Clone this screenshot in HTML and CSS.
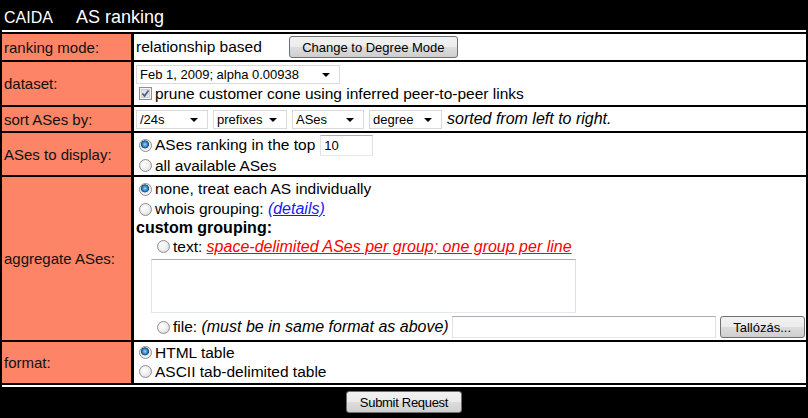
FILE: index.html
```html
<!DOCTYPE html>
<html>
<head lang="en">
    <meta charset="UTF-8">
    <title>AS ranking</title>
    <link rel="stylesheet" href="styles.css">
</head>
<body>
<div class="masthead">
    <span class="org">CAIDA</span>
    <span class="title">AS ranking</span>
</div>
<form class="sheet" action="javascript:;">
    <div class="label">ranking mode:</div>
    <div class="field mode">
        <span>relationship based</span>
        <button type="button" class="btn modeBtn">Change to Degree Mode</button>
    </div>

    <div class="label">dataset:</div>
    <div class="field dataset">
        <span class="pick wide"><select><option>Feb 1, 2009; alpha 0.00938</option></select><i class="arrow"></i></span>
        <div class="line">
            <span class="check"><svg width="13" height="13" viewBox="0 0 13 13"><rect x="0.5" y="0.5" width="12" height="12" fill="#f4f4f4" stroke="#8e8f8f"/><rect x="2.5" y="2.5" width="8" height="8" fill="#e3e3e3" stroke="#d0d0d0"/><path d="M3.5 6.5 L5.5 9 L9.5 3.5" fill="none" stroke="#4a5f97" stroke-width="1.8"/></svg></span>
            <span>prune customer cone using inferred peer-to-peer links</span>
        </div>
    </div>

    <div class="label">sort ASes by:</div>
    <div class="field sort">
        <span class="pick w72"><select><option>/24s</option></select><i class="arrow"></i></span>
        <span class="pick w74"><select><option>prefixes</option></select><i class="arrow"></i></span>
        <span class="pick w72"><select><option>ASes</option></select><i class="arrow"></i></span>
        <span class="pick w73"><select><option>degree</option></select><i class="arrow"></i></span>
        <em>sorted from left to right.</em>
    </div>

    <div class="label">ASes to display:</div>
    <div class="field display">
        <div class="line tall">
            <input type="radio" name="top" checked>
            <span>ASes ranking in the top</span>
            <input type="text" class="txt topN" value="10">
        </div>
        <div class="line">
            <input type="radio" name="top">
            <span>all available ASes</span>
        </div>
    </div>

    <div class="label">aggregate ASes:</div>
    <div class="field aggregate">
        <div class="line l20">
            <input type="radio" name="agg" checked>
            <span>none, treat each AS individually</span>
        </div>
        <div class="line l20">
            <input type="radio" name="agg">
            <span>whois grouping:&nbsp;<a href="javascript:;" class="details">(details)</a></span>
        </div>
        <div class="custom">custom grouping:</div>
        <div class="indent">
            <div class="line">
                <input type="radio" name="agg">
                <span>text:&nbsp;<em class="hint">space-delimited ASes per group; one group per line</em></span>
            </div>
            <textarea class="groups"></textarea>
            <div class="line fileRow">
                <input type="radio" name="agg">
                <span>file:&nbsp;<em>(must be in same format as above)</em></span>
                <input type="text" class="txt fileName">
                <button type="button" class="btn browse">Tallózás...</button>
            </div>
        </div>
    </div>

    <div class="label">format:</div>
    <div class="field format">
        <div class="line">
            <input type="radio" name="fmt" checked>
            <span>HTML table</span>
        </div>
        <div class="line">
            <input type="radio" name="fmt">
            <span>ASCII tab-delimited table</span>
        </div>
    </div>
</form>
<div class="footer">
    <button type="button" class="btn submit">Submit Request</button>
</div>
</body>
</html>
```

FILE: styles.css
```css
* {
    margin: 0;
    padding: 0;
    box-sizing: border-box;
}

body {
    background: #000;
    font-size: 15px;
    font-family: "Liberation Sans", Arial, sans-serif;
    color: #000;
}

.masthead {
    height: 30px;
    display: flex;
    align-items: baseline;
    padding: 7px 0 0 4px;
    color: #fff;
}

.masthead .org {
    font-size: 16px;
    width: 72px;
}

.masthead .title {
    font-size: 18px;
}

.sheet {
    margin: 0 2px;
    padding: 2px 0;
    border-top: 2px solid #fff;
    border-bottom: 2px solid #fff;
    display: grid;
    grid-template-columns: 129px 1fr;
    grid-template-rows: 26px 43px 24px 42px 163px 41px;
    gap: 2px 3px;
}

.label {
    background: #fd8466;
    color: #111;
    padding-left: 2px;
    display: flex;
    align-items: center;
}

.field {
    background: #fff;
    padding-left: 2px;
    font-size: 15.5px;
}

.field em {
    font-size: 16px;
}

.line {
    display: flex;
    align-items: center;
    height: 19px;
    white-space: nowrap;
}

.line.l20 {
    height: 20px;
}

.line.tall {
    height: 22px;
}

.mode {
    display: flex;
    align-items: center;
}

.modeBtn {
    margin-left: 27px;
    width: 169px;
    height: 22px;
}

.dataset {
    padding-top: 3px;
}

.sort {
    display: flex;
    align-items: center;
    gap: 5px;
}

.display {
    padding-top: 1px;
}

.aggregate {
    padding-top: 2px;
}

.format {
    padding-top: 1px;
}

/* selects */
.pick {
    position: relative;
    display: inline-block;
    height: 19px;
}

.pick select {
    appearance: none;
    -webkit-appearance: none;
    width: 100%;
    height: 100%;
    border: 1px solid #d9d9d9;
    background: #fff;
    font-family: "Liberation Sans", Arial, sans-serif;
    font-size: 13px;
    color: #000;
    padding-left: 3px;
    outline: none;
}

.pick .arrow {
    position: absolute;
    right: 10px;
    top: 8px;
    border-left: 4px solid transparent;
    border-right: 4px solid transparent;
    border-top: 4px solid #000;
    pointer-events: none;
}

.pick.wide {
    width: 204px;
    display: block;
}

.w72 { width: 72px; }
.w73 { width: 73px; }
.w74 { width: 74px; }

/* check + radio */
.check {
    display: inline-flex;
    margin: 0 3px 0 3px;
}

input[type="radio"] {
    appearance: none;
    -webkit-appearance: none;
    width: 13px;
    height: 13px;
    margin: 0 3px 0 3px;
    border-radius: 50%;
    border: 1px solid #8f8f8f;
    background: radial-gradient(circle at 40% 40%, #ffffff 0, #f0f0f0 45%, #cfcfcf 100%);
    flex: none;
}

input[type="radio"]:checked {
    background: radial-gradient(circle at 45% 40%, #9fd6f7 0, #2f87c7 28%, #16497a 42%, #e9e9e9 48%, #f4f4f4 70%, #d4d4d4 100%);
}

.txt {
    height: 21px;
    border: 1px solid;
    border-color: #abadb3 #dbdfe6 #e3e9ef #e2e3ea;
    font-family: "Liberation Sans", Arial, sans-serif;
    font-size: 13px;
    padding-left: 3px;
    outline: none;
}

.topN {
    width: 53px;
    margin-left: 5px;
}

.details {
    color: #1a1aee;
    font-style: italic;
    font-size: 16px;
}

.custom {
    font-weight: bold;
    font-size: 16px;
    height: 18px;
    line-height: 18px;
}

.indent {
    margin-left: 15px;
}

.indent input[type="radio"] {
    margin-left: 6px;
}

.hint {
    color: #f00;
    text-decoration: underline;
}

.groups {
    display: block;
    width: 425px;
    height: 54px;
    margin: 3px 0;
    resize: none;
    border: 1px solid;
    border-color: #abadb3 #dbdfe6 #e3e9ef #e2e3ea;
}

.fileRow {
    height: 22px;
}

.fileName {
    width: 264px;
    height: 22px;
    margin-left: 3px;
}

.browse {
    width: 85px;
    height: 22px;
    margin-left: 4px;
    font-size: 13.5px;
}

/* buttons */
.btn {
    border: 1px solid #707070;
    border-radius: 3px;
    background: linear-gradient(#f2f2f2 0, #ebebeb 50%, #dddddd 50%, #cfcfcf 100%);
    font-family: "Liberation Sans", Arial, sans-serif;
    font-size: 13px;
    color: #000;
}

.footer {
    height: 31px;
    display: flex;
    justify-content: center;
    padding-top: 4px;
}

.submit {
    width: 116px;
    height: 22px;
    letter-spacing: -0.3px;
}
```
